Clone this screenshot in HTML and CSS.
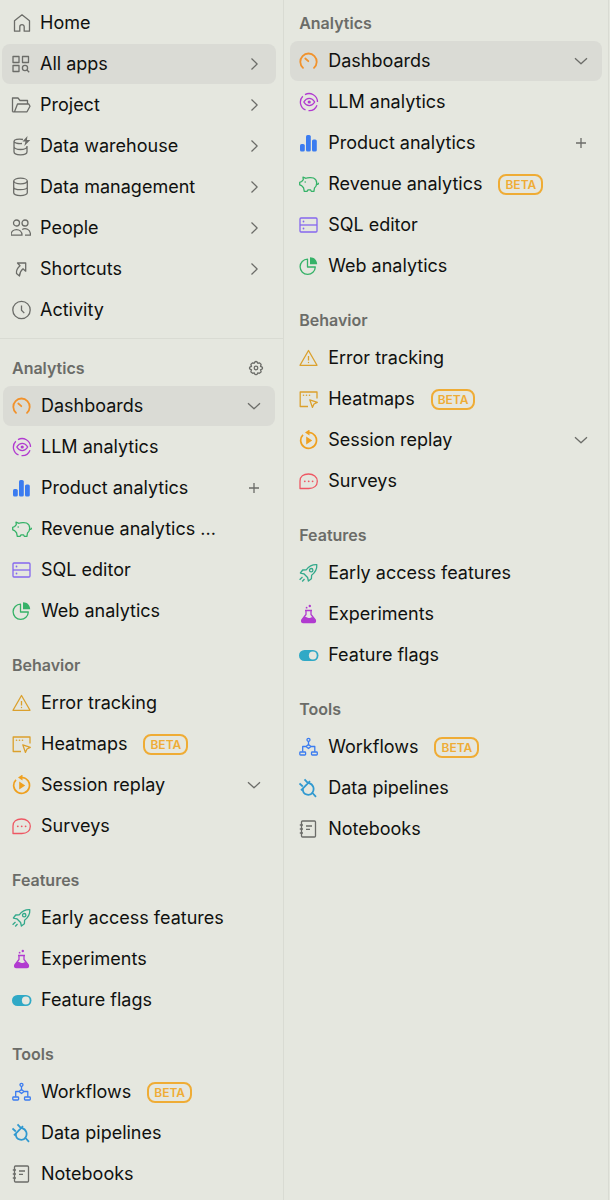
FILE: index.html
```html
<!DOCTYPE html>
<html lang="en">
<head>
<meta charset="utf-8">
<meta name="viewport" content="width=device-width, initial-scale=1">
<title>Navigation</title>
<link rel="stylesheet" href="styles.css">
</head>
<body>
<svg class="sprite" aria-hidden="true">
  <symbol id="home" viewBox="0 0 20 20"><path d="M3.5 7.8 11 1.8l7.5 6v10.4h-5.3v-4.4a2.2 2.2 0 0 0-4.4 0v4.4H3.5z"/></symbol>
  <symbol id="apps" viewBox="0 0 20 20"><path d="M2 2.5h6v6H2zM11.5 2.5h6v6h-6zM2 11.5h6v6H2z"/><circle cx="14" cy="14" r="2.6"/><path d="m16 16 2.2 2.2"/></symbol>
  <symbol id="folder" viewBox="0 0 20 20"><path d="M1.500 16.800V3H7l2 2.500h7.500V9M1.500 16.800H16l3-5.500L17.800 9H6.500L3.500 16.800"/></symbol>
  <symbol id="warehouse" viewBox="0 0 20 20"><path d="M12 3.500C7 2.500 3 3.800 3 5.300c0 1.500 3.500 2.600 8 2.200M3 5.300v10.400C3 17.500 6 18.800 9.500 18.800s6.500-1.300 6.500-3.100V10M3 10.500c0 1.700 3 3 6.500 3s6.500-1.300 6.500-3"/><path class="fill" d="m16.500 0-5 5.500h3L13.300 10l6-6h-3.400z"/></symbol>
  <symbol id="database" viewBox="0 0 20 20"><ellipse cx="9.500" cy="4" rx="6.800" ry="2.800"/><path d="M2.700 4v11.800c0 1.500 3 2.800 6.800 2.800s6.800-1.300 6.800-2.800V4M2.700 10c0 1.500 3 2.700 6.800 2.700s6.800-1.200 6.800-2.700"/></symbol>
  <symbol id="people" viewBox="0 0 20 20"><circle cx="5.500" cy="5" r="3"/><circle cx="14" cy="5" r="3"/><path d="M0 17.200c0-7.500 11-7.500 11 0zM11.200 11.500c3-2 8.300-.5 8.300 5.700h-5.500"/></symbol>
  <symbol id="shortcut" viewBox="0 0 20 20"><path d="M6.500 4h8.200v8.200L12 9.800c-2.500 2-3.200 4-3.500 7.200L5.500 14.500c-.5-3 1-5.500 3.500-7.700z"/></symbol>
  <symbol id="clock" viewBox="0 0 20 20"><circle cx="10.500" cy="10" r="8.700"/><path d="M10.500 5.500v4.800l2.800 2.800"/></symbol>
  <symbol id="gauge" viewBox="0 0 20 20"><g stroke-width="1.800"><path d="M4 16.800a8.200 8.200 0 1 1 11 0M6.300 7.500l3 2.700" stroke-linecap="round"/></g></symbol>
  <symbol id="llm" viewBox="0 0 20 20"><path d="M6 2.600A8.500 8.500 0 0 1 18.500 10M18 13.200A8.500 8.500 0 0 1 9.500 18.600M6.500 17.900A8.500 8.500 0 0 1 3.800 4.200M4.800 10c3-4.800 7.900-4.800 10.900 0-3 4.800-7.900 4.800-10.900 0z"/><circle class="fill" cx="10.200" cy="10" r="1.600"/></symbol>
  <symbol id="bars" viewBox="0 0 20 20"><rect class="fill" x="1" y="11" width="4.800" height="7.500" rx="1.600"/><rect class="fill" x="7" y="2" width="4.800" height="16.500" rx="1.600"/><rect class="fill" x="13" y="6.500" width="4.800" height="12" rx="1.600"/></symbol>
  <symbol id="pig" viewBox="0 0 20 20"><path d="M4 3.200 7 4.300c1.500-.8 6-1 7.500-.3 2.200 1 3.200 2.800 3.200 5 0 2.600-1 4-2.200 5l-.6 3.300h-2.600l-.8-1.500H9l-1 1.500H5.300l-.8-3.600L2.600 11.600.7 10.800V8.300L2.800 7.500c.4-.8 1-1.300 1.500-1.700zM17.700 10.200c1.300.4 2-.5 1.700-1.500"/><circle class="fill" cx="6.200" cy="8" r=".8"/></symbol>
  <symbol id="sql" viewBox="0 0 20 20"><rect x="1" y="3" width="17" height="14" rx="1"/><path d="M1 10h17"/><circle class="fill" cx="4.500" cy="6.500" r=".9"/><circle class="fill" cx="4.500" cy="13.500" r=".9"/></symbol>
  <symbol id="pie" viewBox="0 0 20 20"><path d="M8.500 3.200a7.600 7.600 0 1 0 7.800 7.800H8.500z"/><path class="fill" d="M11 1.200v7.100h7.200c-.2-4.300-2.900-7.100-7.200-7.100z"/></symbol>
  <symbol id="warning" viewBox="0 0 20 20"><path d="M9.500 2.500 18 17.300H1zM9.500 8v4.500"/><circle class="fill" cx="9.500" cy="14.500" r=".7"/></symbol>
  <symbol id="heatmap" viewBox="0 0 20 20"><path d="M9 17.500H1.200V3H18v6.500M10.800 10.800l7.500 2.500-3.300 1.700-1.600 3.400z"/><g class="fill"><circle cx="4.500" cy="6.200" r=".8"/><circle cx="7.500" cy="6.200" r=".8"/><circle cx="10.500" cy="6.200" r=".8"/></g></symbol>
  <symbol id="replay" viewBox="0 0 20 20"><path stroke-width="1.700" d="M4 4.800a7.900 7.900 0 1 0 6-2.300H8.500"/><path class="fill" d="M10.500-.5v6L6 2.500zM7.200 6.500l6 4-6 4z"/></symbol>
  <symbol id="survey" viewBox="0 0 20 20"><path d="M1 17.500V10C1 5.500 4.500 3 9.500 3s8.800 2.700 8.800 7.200-3.500 7.300-8.500 7.300z"/><g class="fill"><circle cx="5.800" cy="10.300" r=".9"/><circle cx="9.700" cy="10.300" r=".9"/><circle cx="13.600" cy="10.300" r=".9"/></g></symbol>
  <symbol id="rocket" viewBox="0 0 20 20"><path d="M17.800 1.700c-5-.3-7.600 1.300-10.600 5.200L3.700 7 1.400 10l3.500.8 3.700 3.700.8 3.500 3-2.300.2-3.500c3.900-3 5.500-5.500 5.200-10.500zM3.500 14 .6 16.800M5.500 16 3.200 18.500"/><circle cx="12.200" cy="7.200" r="1.700"/></symbol>
  <symbol id="flask" viewBox="0 0 20 20"><path d="M6 6.500h7M7 6.500v4L2.800 16c-.5 1.500 0 2.500 1.500 2.500h10.500c1.500 0 2-1 1.500-2.500l-4.300-5.500v-4"/><path class="fill" d="M4.800 13c2-.8 3.500 1.200 5 1 1.500-.1 2.500-1 4-.8l2.500 2.800c.6 1.600 0 2.500-1.500 2.500H4.300c-1.500 0-2-1-1.500-2.500z"/><circle class="fill" cx="10.800" cy="2" r="1.200"/><circle class="fill" cx="7.600" cy="3.700" r=".9"/></symbol>
  <symbol id="toggle" viewBox="0 0 20 20"><rect class="fill" x="0" y="5" width="19.500" height="11" rx="5.500"/><circle class="knob" cx="13.800" cy="10.500" r="3.900"/></symbol>
  <symbol id="flow" viewBox="0 0 20 20"><circle cx="9.500" cy="2.800" r="1.500"/><path d="M9.500 4.300v3.200M9.500 7.500l2.500 2-2.500 2-2.500-2zM7 9.500H3.700v5.300M12 9.500h3.800v5.300"/><rect x=".8" y="15" width="5.800" height="3" rx=".8"/><rect x="12.500" y="15" width="5.800" height="3" rx=".8"/></symbol>
  <symbol id="plug" viewBox="0 0 20 20"><g stroke-width="1.800"><path d="m.5 5.500 3.300 3M5.500 1.300l3.300 3.500M2 12.300 11 3.200M4 10.500c-.6 3.500 1.200 5.700 4.200 6.200 2.200.4 4.300-.5 5.500-2.500 1.700-2.900 1.200-7.700-4-9.400M13.500 15l3.500 3.800"/></g></symbol>
  <symbol id="notebook" viewBox="0 0 20 20"><rect x="2.500" y="2" width="14" height="16" rx="1"/><path d="M.8 6H4M.8 10H4M.8 14H4M7 7h6M7 10.300h4"/></symbol>
  <symbol id="right" viewBox="0 0 20 20"><path d="m6.500 4.500 5.600 5.500-5.600 5.500"/></symbol>
  <symbol id="down" viewBox="0 0 20 20"><path d="m4 7.200 6 5.600 6-5.600"/></symbol>
  <symbol id="plus" viewBox="0 0 20 20"><path d="M10 5v10M5 10h10"/></symbol>
  <symbol id="gear" viewBox="0 0 20 20"><path d="m8.900 3.800 1.100-.3 1.100.3.700 1.500 1.500-.5 1.500 1.100.3.900-.6 1.500 1.700.8.300.9-.3 1-1.700.8.600 1.500-.3.900-1.500 1.100-1.500-.5-.7 1.500-1.100.3-1.100-.3-.7-1.500-1.500.5-1.500-1.100-.3-.9.600-1.500-1.700-.8-.3-1 .3-.9 1.700-.8-.6-1.500.3-.9 1.500-1.100 1.500.5z"/><circle cx="10" cy="10" r="1.800"/></symbol>
</svg>
<div class="panels">
  <div class="panel">
    <nav class="primary" aria-label="Main">
      <ul class="list">
        <li class="row"><a class="link" href="#home"><svg class="icon"><use href="#home"/></svg>Home</a></li>
        <li class="row active"><a class="link" href="#all"><svg class="icon"><use href="#apps"/></svg>All apps</a><button class="action" aria-label="Open all apps"><svg class="icon"><use href="#right"/></svg></button></li>
        <li class="row"><a class="link" href="#project"><svg class="icon"><use href="#folder"/></svg>Project</a><button class="action" aria-label="Open project"><svg class="icon"><use href="#right"/></svg></button></li>
        <li class="row"><a class="link" href="#data-warehouse"><svg class="icon"><use href="#warehouse"/></svg>Data warehouse</a><button class="action" aria-label="Open data warehouse"><svg class="icon"><use href="#right"/></svg></button></li>
        <li class="row"><a class="link" href="#data-management"><svg class="icon"><use href="#database"/></svg>Data management</a><button class="action" aria-label="Open data management"><svg class="icon"><use href="#right"/></svg></button></li>
        <li class="row"><a class="link" href="#persons"><svg class="icon"><use href="#people"/></svg>People</a><button class="action" aria-label="Open people"><svg class="icon"><use href="#right"/></svg></button></li>
        <li class="row"><a class="link" href="#shortcuts"><svg class="icon"><use href="#shortcut"/></svg>Shortcuts</a><button class="action" aria-label="Open shortcuts"><svg class="icon"><use href="#right"/></svg></button></li>
        <li class="row"><a class="link" href="#activity"><svg class="icon"><use href="#clock"/></svg>Activity</a></li>
      </ul>
    </nav>
    <nav class="products" aria-label="Products">
      <section>
        <div class="head"><h2 class="title">Analytics</h2><button class="action settings" aria-label="Customize"><svg class="icon"><use href="#gear"/></svg></button></div>
        <ul class="list">
          <li class="row active"><a class="link" href="#d"><svg class="icon orange"><use href="#gauge"/></svg>Dashboards</a><button class="action" aria-label="Expand dashboards"><svg class="icon"><use href="#down"/></svg></button></li>
          <li class="row"><a class="link" href="#l"><svg class="icon purple"><use href="#llm"/></svg>LLM analytics</a></li>
          <li class="row"><a class="link" href="#p"><svg class="icon blue"><use href="#bars"/></svg>Product analytics</a><button class="action" aria-label="New insight"><svg class="icon"><use href="#plus"/></svg></button></li>
          <li class="row"><a class="link" href="#r"><svg class="icon green"><use href="#pig"/></svg>Revenue analytics ...</a></li>
          <li class="row"><a class="link" href="#s"><svg class="icon violet"><use href="#sql"/></svg>SQL editor</a></li>
          <li class="row"><a class="link" href="#w"><svg class="icon green"><use href="#pie"/></svg>Web analytics</a></li>
        </ul>
      </section>
      <section>
        <div class="head"><h2 class="title">Behavior</h2></div>
        <ul class="list">
          <li class="row"><a class="link" href="#e"><svg class="icon amber"><use href="#warning"/></svg>Error tracking</a></li>
          <li class="row"><a class="link" href="#h"><svg class="icon amber"><use href="#heatmap"/></svg>Heatmaps<span class="badge">BETA</span></a></li>
          <li class="row"><a class="link" href="#sr"><svg class="icon gold"><use href="#replay"/></svg>Session replay</a><button class="action" aria-label="Expand session replay"><svg class="icon"><use href="#down"/></svg></button></li>
          <li class="row"><a class="link" href="#su"><svg class="icon red"><use href="#survey"/></svg>Surveys</a></li>
        </ul>
      </section>
      <section>
        <div class="head"><h2 class="title">Features</h2></div>
        <ul class="list">
          <li class="row"><a class="link" href="#ea"><svg class="icon teal"><use href="#rocket"/></svg>Early access features</a></li>
          <li class="row"><a class="link" href="#ex"><svg class="icon purple"><use href="#flask"/></svg>Experiments</a></li>
          <li class="row"><a class="link" href="#ff"><svg class="icon cyan"><use href="#toggle"/></svg>Feature flags</a></li>
        </ul>
      </section>
      <section>
        <div class="head"><h2 class="title">Tools</h2></div>
        <ul class="list">
          <li class="row"><a class="link" href="#wf"><svg class="icon blue"><use href="#flow"/></svg>Workflows<span class="badge">BETA</span></a></li>
          <li class="row"><a class="link" href="#dp"><svg class="icon sky"><use href="#plug"/></svg>Data pipelines</a></li>
          <li class="row"><a class="link" href="#n"><svg class="icon"><use href="#notebook"/></svg>Notebooks</a></li>
        </ul>
      </section>
    </nav>
  </div>
  <div class="panel">
    <nav class="products flyout" aria-label="All apps">
      <section>
        <div class="head"><h2 class="title">Analytics</h2></div>
        <ul class="list">
          <li class="row active"><a class="link" href="#d"><svg class="icon orange"><use href="#gauge"/></svg>Dashboards</a><button class="action" aria-label="Expand dashboards"><svg class="icon"><use href="#down"/></svg></button></li>
          <li class="row"><a class="link" href="#l"><svg class="icon purple"><use href="#llm"/></svg>LLM analytics</a></li>
          <li class="row"><a class="link" href="#p"><svg class="icon blue"><use href="#bars"/></svg>Product analytics</a><button class="action" aria-label="New insight"><svg class="icon"><use href="#plus"/></svg></button></li>
          <li class="row"><a class="link" href="#r"><svg class="icon green"><use href="#pig"/></svg>Revenue analytics<span class="badge">BETA</span></a></li>
          <li class="row"><a class="link" href="#s"><svg class="icon violet"><use href="#sql"/></svg>SQL editor</a></li>
          <li class="row"><a class="link" href="#w"><svg class="icon green"><use href="#pie"/></svg>Web analytics</a></li>
        </ul>
      </section>
      <section>
        <div class="head"><h2 class="title">Behavior</h2></div>
        <ul class="list">
          <li class="row"><a class="link" href="#e"><svg class="icon amber"><use href="#warning"/></svg>Error tracking</a></li>
          <li class="row"><a class="link" href="#h"><svg class="icon amber"><use href="#heatmap"/></svg>Heatmaps<span class="badge">BETA</span></a></li>
          <li class="row"><a class="link" href="#sr"><svg class="icon gold"><use href="#replay"/></svg>Session replay</a><button class="action" aria-label="Expand session replay"><svg class="icon"><use href="#down"/></svg></button></li>
          <li class="row"><a class="link" href="#su"><svg class="icon red"><use href="#survey"/></svg>Surveys</a></li>
        </ul>
      </section>
      <section>
        <div class="head"><h2 class="title">Features</h2></div>
        <ul class="list">
          <li class="row"><a class="link" href="#ea"><svg class="icon teal"><use href="#rocket"/></svg>Early access features</a></li>
          <li class="row"><a class="link" href="#ex"><svg class="icon purple"><use href="#flask"/></svg>Experiments</a></li>
          <li class="row"><a class="link" href="#ff"><svg class="icon cyan"><use href="#toggle"/></svg>Feature flags</a></li>
        </ul>
      </section>
      <section>
        <div class="head"><h2 class="title">Tools</h2></div>
        <ul class="list">
          <li class="row"><a class="link" href="#wf"><svg class="icon blue"><use href="#flow"/></svg>Workflows<span class="badge">BETA</span></a></li>
          <li class="row"><a class="link" href="#dp"><svg class="icon sky"><use href="#plug"/></svg>Data pipelines</a></li>
          <li class="row"><a class="link" href="#n"><svg class="icon"><use href="#notebook"/></svg>Notebooks</a></li>
        </ul>
      </section>
    </nav>
  </div>
</div>
</body>
</html>
```
FILE: styles.css
```css
* { box-sizing: border-box; }
body {
  margin: 0;
  background: #e5e7df;
  color: #10110f;
  font-family: Inter, "Liberation Sans", sans-serif;
  font-size: 18px;
  line-height: 24px;
}
.sprite { position: absolute; width: 0; height: 0; }
.panels {
  display: grid;
  grid-template-columns: 7fr 8fr;
  min-height: 100vh;
  padding-right: 1px;
}
.panel { border-right: 1px solid #d9dbd3; min-width: 0; }
.primary { padding: 3px 7px 8px 2px; border-bottom: 1px solid #d9dbd3; }
.products { display: grid; gap: 16px; padding: 11px 8px 4px 3px; }
.flyout { padding: 5px 6px 8px; }
.list { list-style: none; margin: 0; padding: 0; display: grid; gap: 1px; }
.row { display: flex; align-items: center; height: 40px; border-radius: 8px; }
.active { background: #dadbd5; }
.link {
  flex: 1;
  display: flex;
  align-items: center;
  min-width: 0;
  padding-left: 9px;
  color: inherit;
  text-decoration: none;
  white-space: nowrap;
}
.link .icon { margin-right: 9px; }
.action {
  display: flex;
  margin: 0;
  padding: 0 11px;
  border: 0;
  background: none;
  color: inherit;
}
.head { display: flex; align-items: center; justify-content: space-between; height: 36px; padding-left: 9px; }
.title { margin: 0; font-size: 16px; font-weight: 600; line-height: 24px; color: #6b6c68; }
.settings { padding: 0 9px; }
.icon {
  flex: none;
  width: 20px;
  height: 20px;
  overflow: visible;
  fill: none;
  stroke: currentColor;
  stroke-width: 1.3;
  stroke-linejoin: round;
  color: #6b6c68;
}
.fill { fill: currentColor; stroke: none; }
.knob { fill: #e5e7df; stroke: none; }
.badge {
  margin-left: 16px;
  padding: 0 5px;
  border: 2px solid #efac35;
  border-radius: 8px;
  color: #efac35;
  font-size: 12px;
  font-weight: 600;
  line-height: 17px;
}
.orange { color: #f1922c; }
.purple { color: #b13bd0; }
.blue { color: #3b7cf0; }
.green { color: #36b268; }
.violet { color: #8567ee; }
.amber { color: #dba02c; }
.gold { color: #efa01f; }
.red { color: #ee5763; }
.teal { color: #33a98c; }
.cyan { color: #30a9c6; }
.sky { color: #3099d0; }
```
